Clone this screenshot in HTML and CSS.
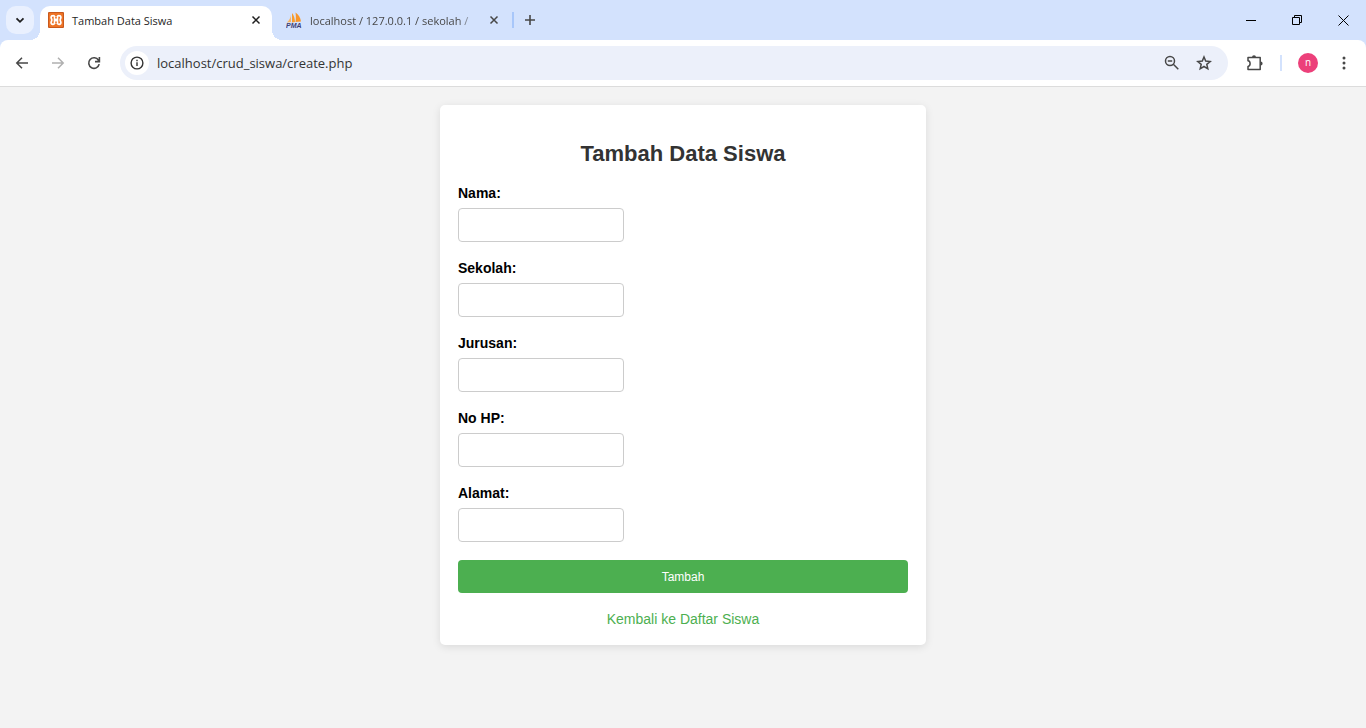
FILE: index.html
```html
<!DOCTYPE html>
<html lang="id">
<head>
<meta charset="utf-8">
<meta name="viewport" content="width=device-width, initial-scale=1">
<title>Tambah Data Siswa</title>
<link rel="stylesheet" href="styles.css">
</head>
<body>
<header class="browser">
  <div class="tabstrip">
    <button class="tab-search" type="button" aria-label="Cari tab">
      <svg width="12" height="12" viewBox="0 0 12 12"><path d="M2.500 4.300 6 7.800l3.500-3.500" fill="none" stroke="#1f1f1f" stroke-width="1.800"/></svg>
    </button>
    <div class="tab tab-active">
      <svg class="favicon" width="16" height="16" viewBox="0 0 16 16">
        <rect width="16" height="16" rx="1" fill="#c9591c"/>
        <rect x="1" y="1" width="14" height="14" rx="1" fill="#ee7426"/>
        <path d="M7 5.200C6.600 4 5.800 3.600 4.800 3.700 3.500 3.800 3 4.700 3.100 5.700c.1.900.7 1.300.7 2.300s-.6 1.400-.7 2.300c-.1 1 .4 1.900 1.700 2 1 .1 1.800-.3 2.200-1.500M9 5.200c.4-1.200 1.200-1.600 2.200-1.500 1.300.1 1.800 1 1.700 2-.1.900-.7 1.300-.7 2.300s.6 1.400.7 2.300c.1 1-.4 1.900-1.700 2-1 .1-1.800-.3-2.200-1.500" fill="none" stroke="#fff" stroke-width="1.700"/>
        <path d="M6.400 4.800v2.400h3.200V4.800M6.400 11.200V8.800h3.200v2.400M6.400 8h3.200" fill="none" stroke="#fff" stroke-width="1.400"/>
      </svg>
      <span class="tab-title">Tambah Data Siswa</span>
      <button class="tab-close" type="button" aria-label="Tutup tab">
        <svg width="10" height="10" viewBox="0 0 10 10"><path d="m1.500 1.500 7 7m0-7-7 7" stroke="#1f1f1f" stroke-width="1.500"/></svg>
      </button>
    </div>
    <div class="tab">
      <svg class="favicon" width="16" height="16" viewBox="0 0 16 16">
        <path d="M5 2.500C4.800 6 3 8.500.8 10.500L5 10Z" fill="#fbb561"/>
        <path d="M6 1v9.500L9 10C8.800 6 7.800 3 6 1Z" fill="#f89c2c"/>
        <path d="M9.500.500c.5 3.500.5 6.500 0 9.500l5.500-.5C14.500 5.500 12.500 2.500 9.500.500Z" fill="#f8962a"/>
        <text x="0" y="15.500" class="pma">PMA</text>
      </svg>
      <span class="tab-title tab-title-faded">localhost / 127.0.0.1 / sekolah /</span>
      <button class="tab-close" type="button" aria-label="Tutup tab">
        <svg width="10" height="10" viewBox="0 0 10 10"><path d="m1.500 1.500 7 7m0-7-7 7" stroke="#474747" stroke-width="1.500"/></svg>
      </button>
    </div>
    <span class="divider tab-divider"></span>
    <button class="new-tab" type="button" aria-label="Tab baru">
      <svg width="12" height="12" viewBox="0 0 12 12"><path d="M6 1v10M1 6h10" stroke="#474747" stroke-width="1.600"/></svg>
    </button>
    <div class="window-controls">
      <button type="button" aria-label="Kecilkan"><svg width="11" height="11" viewBox="0 0 11 11"><path d="M0 5.500h10" stroke="#000"/></svg></button>
      <button type="button" aria-label="Pulihkan"><svg width="11" height="11" viewBox="0 0 11 11"><path d="M.5 2.500h7v7h-7ZM2.500 2.500v-2h7v7h-2" fill="none" stroke="#000"/></svg></button>
      <button type="button" aria-label="Tutup"><svg width="11" height="11" viewBox="0 0 11 11"><path d="m.5.500 10 10m0-10-10 10" stroke="#000"/></svg></button>
    </div>
  </div>
  <div class="toolbar">
    <button class="nav-btn" type="button" aria-label="Kembali"><svg width="14" height="14" viewBox="0 0 14 14"><path d="M13 7H2M7 1.800 1.800 7 7 12.200" fill="none" stroke="#474747" stroke-width="1.500"/></svg></button>
    <button class="nav-btn" type="button" aria-label="Maju"><svg width="14" height="14" viewBox="0 0 14 14"><path d="M1 7h11M7 1.800 12.200 7 7 12.200" fill="none" stroke="#b0b0b0" stroke-width="1.500"/></svg></button>
    <button class="nav-btn" type="button" aria-label="Muat ulang"><svg width="14" height="14" viewBox="0 0 14 14"><path d="M12.200 8.200A5.300 5.300 0 1 1 11.500 4.200L12.300 5.200M12.400 1v4.600H8" fill="none" stroke="#474747" stroke-width="1.600"/></svg></button>
    <div class="omnibox">
      <button class="site-info" type="button" aria-label="Info situs"><svg width="14" height="14" viewBox="0 0 14 14"><circle cx="7" cy="7" r="5.900" fill="none" stroke="#333" stroke-width="1.400"/><path d="M7 6.200V10M7 3.800v1.400" stroke="#333" stroke-width="1.400"/></svg></button>
      <input class="address" type="text" aria-label="Alamat web" value="localhost/crud_siswa/create.php">
      <button class="omni-btn" type="button" aria-label="Zoom"><svg width="16" height="16" viewBox="0 0 16 16"><circle cx="6" cy="6" r="4.500" fill="none" stroke="#474747" stroke-width="1.500"/><path d="m9.300 9.300 5 5M3.800 6h4.400" stroke="#474747" stroke-width="1.500"/></svg></button>
      <button class="omni-btn" type="button" aria-label="Tandai halaman"><svg width="16" height="16" viewBox="0 0 16 16"><path d="m8 2 1.700 4.100 4.500.4-3.400 2.900 1 4.400L8 11.500l-3.800 2.300 1-4.400-3.400-2.900 4.500-.4Z" fill="none" stroke="#474747" stroke-width="1.500"/></svg></button>
    </div>
    <div class="actions">
      <button class="action" type="button" aria-label="Ekstensi"><svg width="18" height="18" viewBox="0 0 18 18"><path d="M2 3.600h12.200v12H2v-3.200c2.800-.4 2.800-5.200 0-5.600Z" fill="none" stroke="#474747" stroke-width="1.500" stroke-linejoin="round"/><path d="M6 3.200a2 2 0 0 1 4 0ZM14.600 7.500a2 2 0 0 1 0 4Z" fill="#474747"/></svg></button>
      <span class="divider"></span>
      <button class="action" type="button" aria-label="Profil"><span class="avatar">n</span></button>
      <button class="action" type="button" aria-label="Menu"><svg width="4" height="16" viewBox="0 0 4 16"><g fill="#474747"><circle cx="2" cy="3" r="1.500"/><circle cx="2" cy="8" r="1.500"/><circle cx="2" cy="13" r="1.500"/></g></svg></button>
    </div>
  </div>
</header>
<main class="page">
  <section class="card">
    <h1>Tambah Data Siswa</h1>
    <form class="form">
      <div class="field"><label for="nama">Nama:</label><input id="nama" name="nama" type="text"></div>
      <div class="field"><label for="sekolah">Sekolah:</label><input id="sekolah" name="sekolah" type="text"></div>
      <div class="field"><label for="jurusan">Jurusan:</label><input id="jurusan" name="jurusan" type="text"></div>
      <div class="field"><label for="no_hp">No HP:</label><input id="no_hp" name="no_hp" type="text"></div>
      <div class="field"><label for="alamat">Alamat:</label><input id="alamat" name="alamat" type="text"></div>
      <button class="submit" type="submit">Tambah</button>
    </form>
    <a class="back" href="#">Kembali ke Daftar Siswa</a>
  </section>
</main>
</body>
</html>
```
FILE: styles.css
```css
* { box-sizing: border-box; }

body {
  margin: 0;
  min-height: 100vh;
  background: #f3f3f3;
  font-family: "Liberation Sans", Arial, sans-serif;
}

svg { display: block; flex: none; }

/* Browser frame */
.browser {
  background: #d3e2fd;
  font-family: "Open Sans", "Segoe UI", sans-serif;
}

.browser button {
  display: flex;
  flex: none;
  align-items: center;
  justify-content: center;
  padding: 0;
  border: 0;
  background: none;
  font: inherit;
}

.tabstrip {
  display: flex;
  align-items: center;
  height: 40px;
  padding-left: 6px;
}

.browser .tab-search {
  width: 28px;
  height: 28px;
  margin-right: 6px;
  border-radius: 10px;
  background: #e9f0fe;
}

.tab {
  display: flex;
  align-items: center;
  align-self: flex-end;
  gap: 8px;
  width: 232px;
  height: 34px;
  padding: 0 8px 6px;
  color: #474747;
  font-size: 11px;
}

.tab + .tab {
  width: 240px;
  padding-right: 10px;
  padding-left: 14px;
}

.tab-active {
  position: relative;
  border-radius: 10px 10px 0 0;
  background: #fff;
  color: #1f1f1f;
}

.tab-active::before,
.tab-active::after {
  content: "";
  position: absolute;
  bottom: 0;
  width: 10px;
  height: 10px;
}

.tab-active::before {
  right: 100%;
  background: radial-gradient(circle at 0 0, transparent 10px, #fff 10px);
}

.tab-active::after {
  left: 100%;
  background: radial-gradient(circle at 100% 0, transparent 10px, #fff 10px);
}

.tab-title {
  flex: 1;
  min-width: 0;
  white-space: nowrap;
}

.tab-title-faded {
  mask-image: linear-gradient(to left, transparent, #000 20px);
}

.browser .tab-close { width: 16px; height: 16px; }

.pma {
  fill: #3d3f78;
  font: italic bold 7px "Liberation Sans", sans-serif;
}

.divider {
  flex: none;
  width: 2px;
  height: 16px;
  background: #a8c7fa;
}

.browser .new-tab { width: 32px; height: 28px; }

.window-controls { display: flex; height: 100%; margin-left: auto; }

.window-controls button { width: 46px; }

.toolbar {
  display: flex;
  align-items: center;
  height: 47px;
  padding: 0 4px;
  border-bottom: 1px solid #dcdcdc;
  border-radius: 8px 8px 0 0;
  background: #fff;
}

.nav-btn { width: 36px; height: 34px; }

.omnibox {
  display: flex;
  flex: 1;
  align-items: center;
  height: 34px;
  margin-left: 8px;
  padding: 0 8px 0 5px;
  border-radius: 17px;
  background: #ecf0fa;
}

.browser .site-info {
  width: 24px;
  height: 24px;
  border-radius: 50%;
  background: #fff;
}

.address {
  flex: 1;
  min-width: 0;
  margin-left: 8px;
  padding: 0;
  border: 0;
  outline: 0;
  background: none;
  color: #333;
  font: 13px "Open Sans", "Segoe UI", sans-serif;
}

.omni-btn { width: 32px; height: 32px; }

.actions { display: flex; align-items: center; padding-left: 9px; }

.action { width: 36px; height: 34px; }

.actions .divider { margin: 0 8px 0 7px; background: #d3e2fd; }

.avatar {
  width: 20px;
  height: 20px;
  border-radius: 50%;
  background: #ec407a;
  color: #fff;
  font-size: 10px;
  line-height: 19px;
  text-align: center;
}

/* Form page */
.page { padding: 18px; }

.card {
  max-width: 486px;
  margin: 0 auto;
  padding: 36px 18px 18px;
  border-radius: 5px;
  background: #fff;
  box-shadow: 0 2px 9px rgba(0, 0, 0, 0.1);
}

h1 {
  margin: 0 0 18px;
  color: #333;
  font-size: 22px;
  line-height: 26px;
  text-align: center;
}

.form { display: flex; flex-direction: column; }

.field {
  display: flex;
  flex-direction: column;
  align-items: flex-start;
  gap: 7px;
  margin-bottom: 18px;
}

label {
  color: #000;
  font-size: 14px;
  font-weight: bold;
  line-height: 16px;
}

.field input {
  width: 166px;
  height: 34px;
  padding: 9px;
  border: 1px solid #ccc;
  border-radius: 4px;
  background: #fff;
  font: 12px "Liberation Sans", Arial, sans-serif;
}

.submit {
  height: 33px;
  border: 0;
  border-radius: 4px;
  background: #4caf50;
  color: #fff;
  font: 12px "Liberation Sans", Arial, sans-serif;
}

.back {
  display: block;
  margin-top: 18px;
  color: #4caf50;
  font-size: 14px;
  line-height: 16px;
  text-align: center;
  text-decoration: none;
}
```
